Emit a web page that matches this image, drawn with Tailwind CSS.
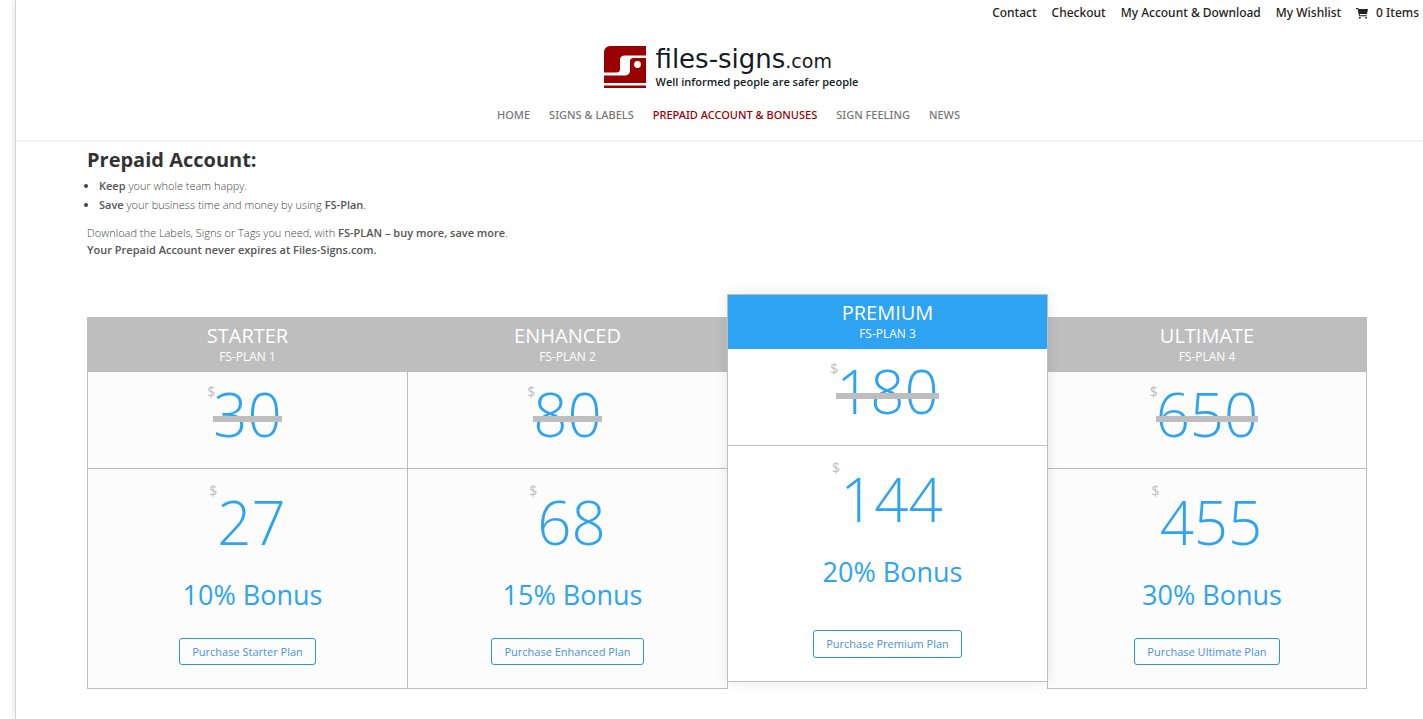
<!DOCTYPE html>
<html lang="en">
<head>
<meta charset="utf-8">
<meta name="viewport" content="width=device-width, initial-scale=1">
<title>Prepaid Account &amp; Bonuses</title>
<script src="https://cdn.jsdelivr.net/npm/@tailwindcss/browser@4"></script>
</head>
<body class="bg-white font-['Open_Sans',sans-serif] text-[11px] text-[#666]">
<div class="ml-[15px] min-h-screen border-l border-[#d4d4d4] shadow-[0_0_7px_rgba(0,0,0,0.14)]">
  <header class="border-b-2 border-[#f5f5f5]">
    <nav aria-label="Account" class="flex justify-end gap-[15px] pt-1 pr-1 font-['Noto_Sans',sans-serif] text-[12px] leading-[18px] font-medium text-[#222]">
      <a href="#">Contact</a>
      <a href="#">Checkout</a>
      <a href="#">My Account &amp; Download</a>
      <a href="#">My Wishlist</a>
      <a href="#" class="flex items-center gap-2">
        <svg class="h-[11px] w-3" viewBox="0 0 12 11" fill="#222" aria-hidden="true"><path d="M0 0h2.300l.4 1H12l-1 5H3.600l.3 1.200h7v1H3L1.600 1H0zM3 9h1.600v1.500H3zM9.300 9h1.600v1.500H9.300z"/></svg>
        <span>0 Items</span>
      </a>
    </nav>
    <div class="pt-6 pl-[21px]">
      <a href="#" class="mx-auto flex w-[253px] gap-[9px] text-[#151b22]">
        <svg class="h-[43px] w-[43px] shrink-0" viewBox="0 0 43 43" aria-hidden="true">
          <path fill="#990000" d="M7 0H42V9.500H21C17.500 9.500 16 11 16 14V23C16 25.500 15 26.500 12 26.500H0V7C0 2.500 2.500 0 7 0Z"/>
          <path fill="#990000" d="M42 12V37H0V29.500H20C24 29.500 26 28 26 24V16C26 13 27 12 30 12Z"/>
          <rect fill="#990000" y="39.500" width="42" height="2.500"/>
          <circle cx="33.500" cy="18.500" r="3.400" fill="#fff"/>
        </svg>
        <span class="whitespace-nowrap">
          <span class="block font-['DejaVu_Sans',sans-serif] text-[26px] leading-[26px]">files-signs<span class="text-[19px]">.com</span></span>
          <span class="block text-[11px] leading-4 font-semibold">Well informed people are safer people</span>
        </span>
      </a>
    </div>
    <nav aria-label="Main" class="flex justify-center gap-[19px] pt-[17px] pb-[17px] pl-[18px] font-['Noto_Sans',sans-serif] text-[11px] leading-4 font-medium text-[#777] uppercase">
      <a href="#">Home</a>
      <a href="#">Signs &amp; Labels</a>
      <a href="#" class="text-[#990000]" aria-current="page">Prepaid Account &amp; Bonuses</a>
      <a href="#">Sign Feeling</a>
      <a href="#">News</a>
    </nav>
  </header>

  <main class="pl-[15px]">
    <div class="mx-auto max-w-[1280px]">
      <h1 class="pt-1 text-[20px] leading-7 font-bold text-[#333]">Prepaid Account:</h1>
      <div class="font-light text-[#444]">
        <ul class="list-disc pt-[2px] pl-3 leading-[19px]">
          <li><strong class="font-semibold text-[#555]">Keep</strong> your whole team happy.</li>
          <li><strong class="font-semibold text-[#555]">Save</strong> your business time and money by using <strong class="font-semibold text-[#555]">FS-Plan</strong>.</li>
        </ul>
        <p class="pt-[10px] leading-[17px]">Download the Labels, Signs or Tags you need, with <strong class="font-semibold text-[#555]">FS-PLAN – buy more, save more</strong>.<br><strong class="font-semibold text-[#555]">Your Prepaid Account never expires at Files-Signs.com.</strong></p>
      </div>

      <div class="mt-9 grid grid-cols-4 items-start text-center text-[#2ea3f2]">
        <section class="mt-[23px] -mr-px border border-[#bebebe] bg-[#fcfcfc]">
          <div class="bg-[#bebebe] pt-[5px] pb-[7px] text-white">
            <h2 class="text-[20px] leading-[26px]">STARTER</h2>
            <p class="text-[12px] leading-4">FS-PLAN 1</p>
          </div>
          <div class="flex justify-center border-b border-[#bebebe] pt-3 pb-6">
            <p class="relative text-[60px] leading-[60px] font-light"><span class="absolute top-0 -left-[6px] text-[14px] leading-4 font-normal text-[#bebebe]">$</span><s class="no-underline after:absolute after:inset-x-0 after:top-8 after:h-[6px] after:bg-[#bebebe]">30</s></p>
          </div>
          <div class="pt-[14px] pb-[23px]">
            <p class="flex justify-center text-[60px] leading-[78px] font-light"><span class="text-[14px] leading-4 font-normal text-[#bebebe]">$</span>27</p>
            <p class="pt-[18px] pl-[10px] text-[27px] leading-8">10% Bonus</p>
            <a href="#" class="mt-[27px] inline-block rounded-[3px] border border-[#2e94d8] px-3 leading-[25px] text-[#4a90e2]">Purchase Starter Plan</a>
          </div>
        </section>

        <section class="mt-[23px] -mr-px border border-[#bebebe] bg-[#fcfcfc]">
          <div class="bg-[#bebebe] pt-[5px] pb-[7px] text-white">
            <h2 class="text-[20px] leading-[26px]">ENHANCED</h2>
            <p class="text-[12px] leading-4">FS-PLAN 2</p>
          </div>
          <div class="flex justify-center border-b border-[#bebebe] pt-3 pb-6">
            <p class="relative text-[60px] leading-[60px] font-light"><span class="absolute top-0 -left-[6px] text-[14px] leading-4 font-normal text-[#bebebe]">$</span><s class="no-underline after:absolute after:inset-x-0 after:top-8 after:h-[6px] after:bg-[#bebebe]">80</s></p>
          </div>
          <div class="pt-[14px] pb-[23px]">
            <p class="flex justify-center text-[60px] leading-[78px] font-light"><span class="text-[14px] leading-4 font-normal text-[#bebebe]">$</span>68</p>
            <p class="pt-[18px] pl-[10px] text-[27px] leading-8">15% Bonus</p>
            <a href="#" class="mt-[27px] inline-block rounded-[3px] border border-[#2e94d8] px-3 leading-[25px] text-[#4a90e2]">Purchase Enhanced Plan</a>
          </div>
        </section>

        <section class="z-10 -mr-px border border-[#bebebe] bg-white shadow-[0_0_12px_rgba(0,0,0,0.1)]">
          <div class="bg-[#2ea3f2] pt-[5px] pb-[7px] text-white">
            <h2 class="text-[20px] leading-[26px]">PREMIUM</h2>
            <p class="text-[12px] leading-4">FS-PLAN 3</p>
          </div>
          <div class="flex justify-center border-b border-[#bebebe] pt-3 pb-6">
            <p class="relative text-[60px] leading-[60px] font-light"><span class="absolute top-0 -left-[6px] text-[14px] leading-4 font-normal text-[#bebebe]">$</span><s class="no-underline after:absolute after:inset-x-0 after:top-8 after:h-[6px] after:bg-[#bebebe]">180</s></p>
          </div>
          <div class="pt-[14px] pb-[23px]">
            <p class="flex justify-center text-[60px] leading-[78px] font-light"><span class="text-[14px] leading-4 font-normal text-[#bebebe]">$</span>144</p>
            <p class="pt-[18px] pl-[10px] text-[27px] leading-8">20% Bonus</p>
            <a href="#" class="mt-[42px] inline-block rounded-[3px] border border-[#2e94d8] px-3 leading-[26px] text-[#4a90e2]">Purchase Premium Plan</a>
          </div>
        </section>

        <section class="mt-[23px] border border-[#bebebe] bg-[#fcfcfc]">
          <div class="bg-[#bebebe] pt-[5px] pb-[7px] text-white">
            <h2 class="text-[20px] leading-[26px]">ULTIMATE</h2>
            <p class="text-[12px] leading-4">FS-PLAN 4</p>
          </div>
          <div class="flex justify-center border-b border-[#bebebe] pt-3 pb-6">
            <p class="relative text-[60px] leading-[60px] font-light"><span class="absolute top-0 -left-[6px] text-[14px] leading-4 font-normal text-[#bebebe]">$</span><s class="no-underline after:absolute after:inset-x-0 after:top-8 after:h-[6px] after:bg-[#bebebe]">650</s></p>
          </div>
          <div class="pt-[14px] pb-[23px]">
            <p class="flex justify-center text-[60px] leading-[78px] font-light"><span class="text-[14px] leading-4 font-normal text-[#bebebe]">$</span>455</p>
            <p class="pt-[18px] pl-[10px] text-[27px] leading-8">30% Bonus</p>
            <a href="#" class="mt-[27px] inline-block rounded-[3px] border border-[#2e94d8] px-3 leading-[25px] text-[#4a90e2]">Purchase Ultimate Plan</a>
          </div>
        </section>
      </div>
    </div>
  </main>
</div>
</body>
</html>
